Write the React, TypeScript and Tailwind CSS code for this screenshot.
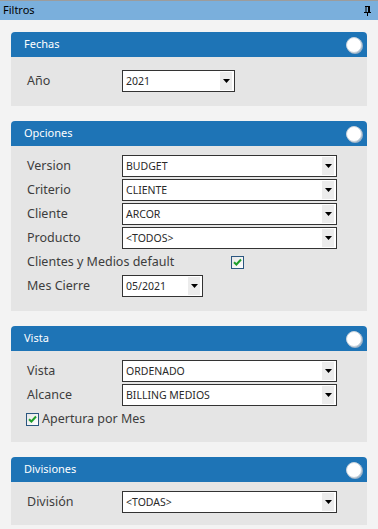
import React from "react"

const font = { fontFamily: '"Noto Sans", "Open Sans", sans-serif' }

function Select({ value, width }: { value: string; width: string }) {
  return (
    <div className={`flex h-[22px] ${width} border border-[#333333] bg-white`}>
      <span className="flex-1 pl-[3px] text-[10.5px] leading-[20px] text-[#2a2a2a] truncate">{value}</span>
      <span className="my-px mr-[2px] flex w-[12px] items-center justify-center bg-[#ececec]">
        <svg width="7" height="4" viewBox="0 0 7 4">
          <path d="M0 0H7L3.5 4Z" fill="#000" />
        </svg>
      </span>
    </div>
  )
}

function Check() {
  return (
    <span className="flex h-[13px] w-[13px] items-center justify-center border border-[#2a5680] bg-gradient-to-br from-[#e6e6e6] to-white">
      <svg width="9" height="8" viewBox="0 0 9 8">
        <path d="M1 4.2L3.4 6.5L8 1.5" stroke="#1e9e2a" strokeWidth="2" fill="none" />
      </svg>
    </span>
  )
}

function Row({ label, children }: { label: string; children: React.ReactNode }) {
  return (
    <div className="flex h-[22px] items-center">
      <span className="w-[95px] text-[12.5px] text-[#3d3d3d]">{label}</span>
      {children}
    </div>
  )
}

function Panel({ title, body, children }: { title: string; body: string; children: React.ReactNode }) {
  return (
    <div>
      <div className="flex h-[25px] items-center justify-between rounded-t-[4px] bg-[#1e74b6] pl-[13px] pr-[5px]">
        <span className="text-[11px] text-white">{title}</span>
        <span className="h-[16px] w-[16px] rounded-full border border-[#c9d3dc] bg-white shadow-[1px_1px_0_#9fb4c8]" />
      </div>
      <div className={`flex flex-col gap-[2px] bg-[#e5e5e5] px-[16px] ${body}`}>{children}</div>
    </div>
  )
}

export default function App() {
  return (
    <div className="h-[529px] w-[378px] overflow-hidden bg-[#f3f3f3]" style={font}>
      {/* barra superior */}
      <div className="flex h-[20px] items-center justify-between border-t border-[#9c9c9c] bg-[#7aafdc] pl-[3px] pr-[7px]">
        <span className="text-[11px] text-black">Filtros</span>
        <svg width="7" height="10" viewBox="0 0 7 10">
          <path d="M1 0.5H6M2 0.5V6M4.5 0.5V6M0 6.5H7M3.5 6.5V10" stroke="#000" strokeWidth="1" fill="none" />
          <rect x="4" y="1" width="2" height="5" fill="#000" />
        </svg>
      </div>

      <div className="flex flex-col gap-[15px] px-[11px] pt-[12px]">
        <Panel title="Fechas" body="pt-[13px] pb-[14px]">
          <Row label="Año">
            <Select value="2021" width="w-[113px]" />
          </Row>
        </Panel>

        <Panel title="Opciones" body="pt-[9px] pb-[14px]">
          <Row label="Version">
            <Select value="BUDGET" width="w-[215px]" />
          </Row>
          <Row label="Criterio">
            <Select value="CLIENTE" width="w-[215px]" />
          </Row>
          <Row label="Cliente">
            <Select value="ARCOR" width="w-[215px]" />
          </Row>
          <Row label="Producto">
            <Select value="<TODOS>" width="w-[215px]" />
          </Row>
          <div className="flex h-[22px] items-center">
            <span className="w-[204px] text-[12.5px] text-[#3d3d3d]">Clientes y Medios default</span>
            <Check />
          </div>
          <Row label="Mes Cierre">
            <Select value="05/2021" width="w-[81px]" />
          </Row>
        </Panel>

        <Panel title="Vista" body="pt-[9px] pb-[12px]">
          <Row label="Vista">
            <Select value="ORDENADO" width="w-[215px]" />
          </Row>
          <Row label="Alcance">
            <Select value="BILLING MEDIOS" width="w-[215px]" />
          </Row>
          <div className="flex h-[22px] items-center gap-[3px] -ml-px">
            <Check />
            <span className="text-[12.5px] text-[#3d3d3d]">Apertura por Mes</span>
          </div>
        </Panel>

        <Panel title="Divisiones" body="pt-[9px] pb-[12px]">
          <Row label="División">
            <Select value="<TODAS>" width="w-[215px]" />
          </Row>
        </Panel>
      </div>
    </div>
  )
}
